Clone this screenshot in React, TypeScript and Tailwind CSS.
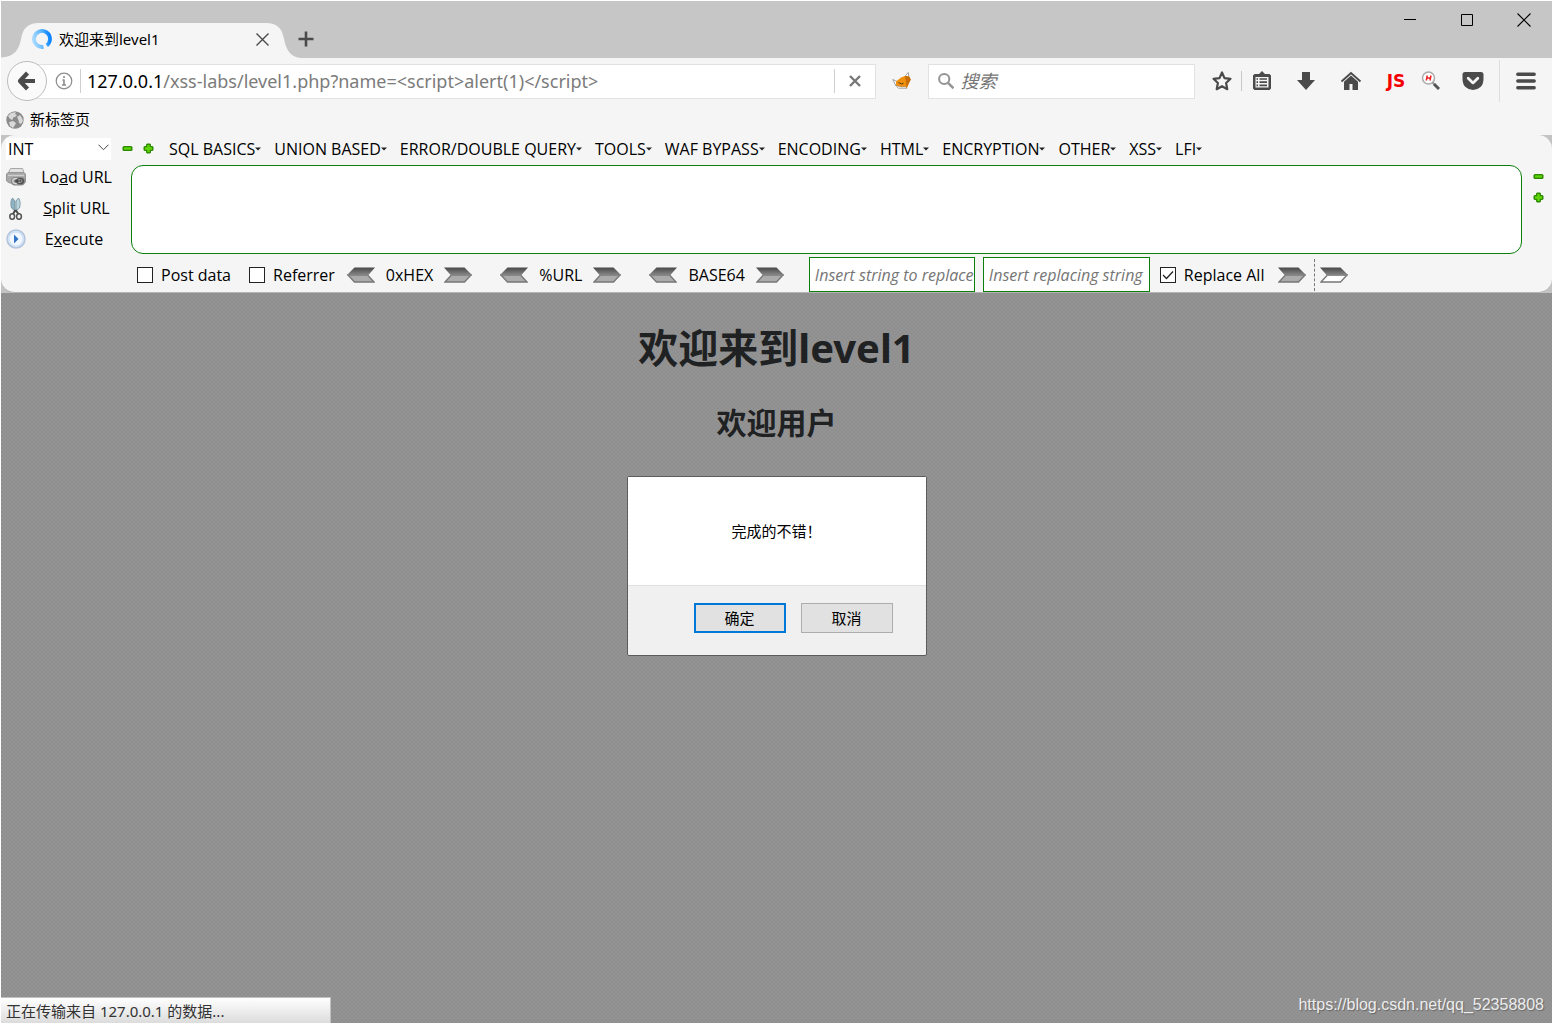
import { useState } from 'react';

const menus = [
  'SQL BASICS',
  'UNION BASED',
  'ERROR/DOUBLE QUERY',
  'TOOLS',
  'WAF BYPASS',
  'ENCODING',
  'HTML',
  'ENCRYPTION',
  'OTHER',
  'XSS',
  'LFI',
];

const encoders = ['0xHEX', '%URL', 'BASE64'];

/* ---------- Icons ---------- */

function MinusIcon() {
  return (
    <svg width="11" height="11" viewBox="0 0 11 11">
      <rect x="0.5" y="3" width="10" height="5" rx="1.5" fill="#2f8a00" />
      <rect x="2" y="4.4" width="7" height="2.2" fill="#5fd60a" />
    </svg>
  );
}

function PlusIcon() {
  return (
    <svg width="11" height="11" viewBox="0 0 11 11">
      <path d="M4 .5h3l1 1v1.500h1.500l1 1v3l-1 1H8v1.500l-1 1H4l-1-1V8H1.500l-1-1V4l1-1H3V1.500z" fill="#2f8a00" />
      <path d="M4.300 2h2.400v2.300H9v2.400H6.700V9H4.300V6.700H2V4.300h2.300z" fill="#5fd60a" />
    </svg>
  );
}

function ArrowIcon({ left = false, hollow = false }: { left?: boolean; hollow?: boolean }) {
  return (
    <svg width="28" height="16" viewBox="0 0 28 16">
      <defs>
        <linearGradient id="arrowDark" x1="0" y1="0" x2="0" y2="1">
          <stop offset="0" stopColor="#484848" />
          <stop offset="1" stopColor="#8a8a8a" />
        </linearGradient>
      </defs>
      <g transform={left ? 'matrix(-1 0 0 1 28 0)' : undefined}>
        <path d="M1 15L7.500 8H27l-6.500 7z" fill={hollow ? '#fff' : '#ababab'} stroke="#777" strokeWidth="1.300" />
        <path d="M0 .5h20.500L28 8v.5H7z" fill="url(#arrowDark)" />
      </g>
    </svg>
  );
}

function LoadIcon() {
  return (
    <svg width="20" height="20" viewBox="0 0 20 20">
      <path d="M4.500 1.500h12l1.500 4H2.500z" fill="#e2e2e2" stroke="#a8a8a8" />
      <path d="M.5 7L2 5.500h16L19.500 7v8l-1 1H3.500l-3-2z" fill="#a8a8a8" stroke="#969696" />
      <path d="M2 8.500h16" stroke="#d0d0d0" strokeWidth="1.200" />
      <rect x="5" y="10" width="14" height="8.500" rx="4" fill="#8a8a8a" />
      <rect x="6.800" y="11.600" width="6.500" height="5" rx="2.500" fill="none" stroke="#ddd" strokeWidth="1.200" />
      <rect x="10.800" y="11.600" width="6.500" height="5" rx="2.500" fill="none" stroke="#505050" strokeWidth="1.400" />
      <path d="M9 14h6" stroke="#444" strokeWidth="1.400" />
    </svg>
  );
}

function ScissorsIcon() {
  return (
    <svg width="20" height="22" viewBox="0 1 20 22">
      <path d="M6.500 1C4.500 3 4.500 8 5.500 11l3.500 3V4z" fill="#8fb3c2" stroke="#6d8f9d" strokeWidth=".8" />
      <path d="M12.500 1c2 2 2 7 1 10L10 14V4z" fill="#b9d3dd" stroke="#6d8f9d" strokeWidth=".8" />
      <path d="M9.500 13l-2.500 4M9.500 13l3 4" stroke="#444" strokeWidth="2" />
      <ellipse cx="6.200" cy="19.500" rx="2.400" ry="2.800" fill="none" stroke="#555" strokeWidth="1.600" />
      <ellipse cx="13" cy="19.500" rx="2.400" ry="2.800" fill="none" stroke="#555" strokeWidth="1.600" />
    </svg>
  );
}

function ExecuteIcon() {
  return (
    <svg width="20" height="20" viewBox="0 0 20 20">
      <circle cx="10" cy="10" r="9" fill="#d3e3f6" stroke="#b3c4dd" strokeWidth="1.500" />
      <circle cx="10" cy="10" r="6.300" fill="#f2f8ff" />
      <path d="M8 5.500l4.500 4.500L8 14.500z" fill="#2f74c6" />
    </svg>
  );
}

function FoxIcon() {
  return (
    <svg width="20" height="18" viewBox="0 0 20 18">
      <path d="M.8 7.500L5 9.500 4 14zM13 4.500L16.200.5l.8 5z" fill="#fff" stroke="#8a8a8a" strokeWidth=".8" />
      <path d="M4 9.500L9 5.500l4-1.500 4 .5 1.800 3L17 11l-2 5H6l-2-2.500z" fill="#f0900c" />
      <path d="M13 4l4 .5 1.800 3L17 11l-2.500 5-.5-6z" fill="#c76d08" />
      <path d="M4 13.500l2.500 3H15l-1.500-1.800-4 .3z" fill="#e8e8e8" stroke="#8a8a8a" strokeWidth=".5" />
      <path d="M6.500 10.500l3 1.500 2-.8" fill="none" stroke="#4a3a20" />
    </svg>
  );
}

function GlobeIcon() {
  return (
    <svg width="18" height="18" viewBox="0 0 18 18">
      <circle cx="9" cy="9" r="8.700" fill="#8a8a8a" />
      <path d="M2 5l3-3 5-1-1 2 2 1-2 2-2 .5L6.500 9 4 8zM11 6l3-2 2 3 1 3-2 3-2-1-.5-3zM3 11l4-1 3 2-1 2-2 3-3-2z" fill="#d8d8d8" />
    </svg>
  );
}

/* ---------- Title bar ---------- */

function TitleBar() {
  return (
    <div className="relative flex h-[57px] items-start justify-between bg-[#c6c6c6]">
      <svg width="300" height="36" viewBox="0 0 300 36" className="absolute bottom-0 left-0">
        <path d="M0 36v-.5C13 35 18 28 20 17 22 6 27 1 38 1h227c11 0 16 5 18 16 2 11 7 18.500 17 19z" fill="#f5f5f5" />
      </svg>
      <div className="relative flex h-[38px] items-center self-end">
        <div className="flex w-[269px] items-center pl-[30px]">
          <svg width="22" height="22" viewBox="0 0 22 22">
            <defs>
              <linearGradient id="ring" x1="0" y1=".6" x2="1" y2=".4">
                <stop offset="0" stopColor="#a5d8ff" />
                <stop offset=".5" stopColor="#62b8fb" />
                <stop offset="1" stopColor="#0a84ff" />
              </linearGradient>
            </defs>
            <path d="M15.800 17.400A8 8 0 1 0 12.500 18.860" fill="none" stroke="url(#ring)" strokeWidth="3.800" />
          </svg>
          <span className="ml-1.5 flex-1 text-[15px] leading-5">欢迎来到level1</span>
          <button aria-label="Close tab">
            <svg width="15" height="15" viewBox="0 0 15 15">
              <path d="M1.500 1.500l12 12M13.500 1.500l-12 12" stroke="#4a4a4a" strokeWidth="1.400" />
            </svg>
          </button>
        </div>
        <button aria-label="New tab" className="ml-7">
          <svg width="16" height="16" viewBox="0 0 16 16">
            <path d="M8 .5v15M.5 8h15" stroke="#4a4a4a" strokeWidth="2.600" />
          </svg>
        </button>
      </div>
      <div className="flex gap-[43px] pt-3 pr-[21px]">
        <button aria-label="Minimize">
          <svg width="14" height="14" viewBox="0 0 14 14"><path d="M1 6.500h12" stroke="#000" /></svg>
        </button>
        <button aria-label="Maximize">
          <svg width="14" height="14" viewBox="0 0 14 14"><path d="M1.500 1.500h11v11h-11z" fill="none" stroke="#000" /></svg>
        </button>
        <button aria-label="Close">
          <svg width="14" height="14" viewBox="0 0 14 14"><path d="M.5.5l13 13M13.500.5l-13 13" stroke="#000" strokeWidth="1.100" /></svg>
        </button>
      </div>
    </div>
  );
}

/* ---------- Navigation toolbar ---------- */

function NavBar() {
  return (
    <div className="flex h-[46px] items-center pl-1.5">
      <button aria-label="Back" className="z-10 flex size-10 items-center justify-center rounded-full border border-[#bdbdbd] bg-[#fafafa]">
        <svg width="20" height="20" viewBox="0 0 20 20">
          <path d="M10.500 2L3 10l7.500 8M4 10h14" fill="none" stroke="#4a4a4a" strokeWidth="4.200" strokeLinejoin="round" />
        </svg>
      </button>
      <div className="-ml-3 flex h-[35px] flex-1 items-center border border-[#e2e2e2] bg-white pl-[19px]">
        <svg width="18" height="18" viewBox="0 0 18 18">
          <circle cx="9" cy="9" r="7.800" fill="none" stroke="#8c8c8c" strokeWidth="1.200" />
          <path d="M9 4v2M9 7.500v5.500M7.500 8H9M7 13h4" stroke="#8c8c8c" strokeWidth="1.600" />
        </svg>
        <div className="ml-[7px] flex h-6 flex-1 items-center border-l border-[#cfcfcf] pl-1.5 text-[18px] text-[#7b7b7b]">
          <span className="text-black">127.0.0.1</span>/xss-labs/level1.php?name=&lt;script&gt;alert(1)&lt;/script&gt;
        </div>
        <button aria-label="Stop" className="flex h-6 w-[41px] items-center justify-center border-l border-[#cfcfcf]">
          <svg width="12" height="12" viewBox="0 0 12 12">
            <path d="M1 1l10 10M11 1L1 11" stroke="#777" strokeWidth="2.400" />
          </svg>
        </button>
      </div>
      <button aria-label="HackBar" className="mx-4"><FoxIcon /></button>
      <label className="flex h-[35px] w-[267px] items-center border border-[#e2e2e2] bg-white pl-[9px]">
        <svg width="18" height="18" viewBox="0 0 18 18">
          <circle cx="6.800" cy="6.800" r="5.600" fill="none" stroke="#949494" strokeWidth="2.200" />
          <path d="M11 11l6 6" stroke="#949494" strokeWidth="2.600" />
        </svg>
        <input
          type="text"
          aria-label="搜索"
          placeholder="搜索"
          className="ml-1.5 w-full min-w-0 text-[18px] italic outline-none placeholder:text-[#757575]"
        />
      </label>
      <div className="flex items-center text-[#4a4a4a]">
        <button aria-label="Bookmark" className="ml-4">
          <svg width="22" height="22" viewBox="0 0 22 22">
            <path d="M11 2.500l2.500 5.600 6 .7-4.400 4.200 1.200 6.200L11 16.200l-5.300 3 1.200-6.200-4.400-4.200 6-.7z" fill="none" stroke="currentColor" strokeWidth="2.200" strokeLinejoin="round" />
          </svg>
        </button>
        <span className="ml-2 h-5 w-px bg-[#c8c8c8]" />
        <button aria-label="Bookmarks list" className="ml-2.5">
          <svg width="20" height="20" viewBox="0 0 20 20">
            <path d="M7 3l3-3 3 3h4.500L19 4.500v13L17.500 19h-15L1 17.500v-13L2.500 3z" fill="currentColor" />
            <path d="M3.500 6h13v10.500h-13z" fill="#f5f5f5" />
            <path d="M4.500 8h1.500M7.500 8H15M4.500 11.200h1.500M7.500 11.200H15M4.500 14.400h1.500M7.500 14.400H15" stroke="currentColor" strokeWidth="1.700" />
          </svg>
        </button>
        <button aria-label="Downloads" className="ml-6">
          <svg width="20" height="20" viewBox="0 0 20 20">
            <path d="M6 1h8v8h5l-9 10L1 9h5z" fill="currentColor" />
          </svg>
        </button>
        <button aria-label="Home" className="ml-6">
          <svg width="22" height="20" viewBox="0 0 22 20">
            <path d="M1.500 10.500L11 2l9.500 8.500" fill="none" stroke="currentColor" strokeWidth="1.900" />
            <path d="M4 10.700l7-6.200 7 6.200V19h-5.500v-6h-3v6H4z" fill="currentColor" />
          </svg>
        </button>
        <button className="ml-6 w-5 text-center font-['DejaVu_Sans',sans-serif] text-[17px] leading-5 font-bold text-[#f50000]">JS</button>
        <button aria-label="Inspect" className="ml-[15px]">
          <svg width="20" height="20" viewBox="0 0 20 20">
            <circle cx="7.500" cy="7" r="6" fill="#fff" stroke="#aaa" strokeWidth="1.500" />
            <path d="M6.300 4.500l-1 5M10 4.500l-1 5M6 7h3.500" stroke="#ee2020" strokeWidth="1.500" />
            <path d="M11.500 11.500l2 2" stroke="#999" strokeWidth="2" />
            <path d="M13 13l5 5" stroke="#555" strokeWidth="3" />
          </svg>
        </button>
        <button aria-label="Pocket" className="ml-[21px]">
          <svg width="22" height="20" viewBox="0 0 22 20">
            <path d="M3 1h16q2.500 0 2.500 2.500V8q0 5-3 8-3.300 3-7.500 3t-7.500-3q-3-3-3-8V3.500Q.5 1 3 1z" fill="currentColor" />
            <path d="M6.200 7.300l4.800 4.600 4.800-4.600" fill="none" stroke="#f5f5f5" strokeWidth="2.800" strokeLinecap="round" strokeLinejoin="round" />
          </svg>
        </button>
        <span className="ml-[15px] h-[42px] w-px bg-[#dedede]" />
        <button aria-label="Menu" className="mr-4 ml-4">
          <svg width="20" height="18" viewBox="0 0 20 18">
            <path d="M1.800 2.300h16.400M1.800 9h16.400M1.800 15.700h16.400" stroke="currentColor" strokeWidth="3.400" strokeLinecap="round" />
          </svg>
        </button>
      </div>
    </div>
  );
}

/* ---------- HackBar ---------- */

function Check({ label, defaultChecked = false }: { label: string; defaultChecked?: boolean }) {
  const [checked, setChecked] = useState(defaultChecked);
  return (
    <label className="flex shrink-0 items-center gap-2">
      <span className="relative flex">
        <input
          type="checkbox"
          checked={checked}
          onChange={(e) => setChecked(e.target.checked)}
          className="size-4 appearance-none border border-[#222] bg-white"
        />
        {checked && (
          <svg width="16" height="16" viewBox="0 0 16 16" className="pointer-events-none absolute inset-0">
            <path d="M3 8l3.500 3.500L13 4.500" fill="none" stroke="#222" strokeWidth="1.300" />
          </svg>
        )}
      </span>
      {label}
    </label>
  );
}

function HackBar() {
  return (
    <div className="bg-[#c3c3c3]">
      <div className="rounded-[14px] border-b border-[#b5b5b5] bg-[#f5f5f5] pt-0.5 font-['Open_Sans','Noto_Sans_CJK_SC',sans-serif] text-[16px] leading-5">
        <div className="flex h-[23px] items-center pl-[5px]">
          <div className="relative w-[105px]">
            <select aria-label="Type" className="h-[22px] w-full appearance-none bg-white pl-0.5">
              <option>INT</option>
            </select>
            <svg width="11" height="7" viewBox="0 0 11 7" className="pointer-events-none absolute top-1.5 right-0.5">
              <path d="M.5.700l5 5 5-5" fill="none" stroke="#444" />
            </svg>
          </div>
          <div className="ml-[11px] flex gap-2.5">
            <button aria-label="Remove"><MinusIcon /></button>
            <button aria-label="Add"><PlusIcon /></button>
          </div>
          <nav className="ml-[15px] flex gap-[13px]">
            {menus.map((menu) => (
              <button key={menu} className="flex items-center whitespace-nowrap">
                {menu}
                <svg width="6" height="4" viewBox="0 0 6 4"><path d="M0 .5h6l-3 3z" fill="#222" /></svg>
              </button>
            ))}
          </nav>
        </div>

        <div className="mt-[5px] flex pl-[5px]">
          <div className="w-[125px]">
            <button className="flex h-[31px] w-full items-start pt-0.5">
              <LoadIcon />
              <span className="w-[101px] text-center">Lo<u>a</u>d URL</span>
            </button>
            <button className="flex h-[31px] w-full items-start pt-0.5">
              <ScissorsIcon />
              <span className="w-[101px] text-center"><u>S</u>plit URL</span>
            </button>
            <button className="flex h-[27px] w-full items-start pt-0.5">
              <ExecuteIcon />
              <span className="w-24 text-center">E<u>x</u>ecute</span>
            </button>
          </div>
          <textarea aria-label="URL" className="h-[89px] flex-1 resize-none rounded-[12px] border border-[#0a800a] bg-white px-2 py-1 outline-none" />
          <div className="flex flex-col gap-2.5 pt-1.5 pr-2 pl-[11px]">
            <button aria-label="Shrink"><MinusIcon /></button>
            <button aria-label="Grow"><PlusIcon /></button>
          </div>
        </div>

        <div className="mt-[3px] flex h-[35px] items-center pl-[136px]">
          <Check label="Post data" />
          <div className="ml-[18px]"><Check label="Referrer" /></div>
          <div className="ml-3 flex gap-7">
            {encoders.map((name) => (
              <div key={name} className="flex items-center gap-[11px]">
                <button aria-label={`Decode ${name}`}><ArrowIcon left /></button>
                <span>{name}</span>
                <button aria-label={`Encode ${name}`}><ArrowIcon /></button>
              </div>
            ))}
          </div>
          <input
            type="text"
            aria-label="Insert string to replace"
            placeholder="Insert string to replace"
            className="ml-[25px] h-[35px] w-[166px] border border-[#0a800a] bg-white pl-[5px] italic outline-none placeholder:text-[#757575]"
          />
          <input
            type="text"
            aria-label="Insert replacing string"
            placeholder="Insert replacing string"
            className="mr-2.5 ml-2 h-[35px] w-[167px] border border-[#0a800a] bg-white pl-[5px] italic outline-none placeholder:text-[#757575]"
          />
          <Check label="Replace All" defaultChecked />
          <button aria-label="Replace" className="ml-3.5"><ArrowIcon /></button>
          <span className="ml-2 h-8 border-l border-dashed border-[#777]" />
          <button aria-label="Replace next" className="ml-[5px]"><ArrowIcon hollow /></button>
        </div>
      </div>
    </div>
  );
}

/* ---------- Alert ---------- */

function AlertDialog() {
  return (
    <div role="alertdialog" aria-label="alert" className="mt-8 w-[300px] rounded-[2px] border border-[#5c5c5c] bg-[#f0f0f0] text-[15px] leading-5">
      <p className="flex h-[109px] items-center justify-center border-b border-[#dfdfdf] bg-white">完成的不错！</p>
      <div className="flex h-[69px] justify-end gap-[15px] pt-[17px] pr-[33px]">
        <button className="h-[30px] w-[92px] border-2 border-[#0078d7] bg-[#e1e1e1]">确定</button>
        <button className="h-[30px] w-[92px] border border-[#adadad] bg-[#e1e1e1]">取消</button>
      </div>
    </div>
  );
}

export default function App() {
  return (
    <div className="flex min-h-screen flex-col border border-white bg-[#f5f5f5] font-['Noto_Sans','Noto_Sans_CJK_SC',sans-serif] text-black">
      <TitleBar />
      <NavBar />
      <div className="flex h-[31px] items-center pl-[5px] text-[15px]">
        <a href="#" className="flex items-center gap-1.5"><GlobeIcon />新标签页</a>
      </div>
      <HackBar />
      <main className="relative flex flex-1 flex-col items-center bg-[#919192] bg-[conic-gradient(#8e8e8f_25%,#949495_0_50%,#8e8e8f_0_75%,#949495_0)] bg-[length:4px_4px] pt-[25px] text-[#202122]">
        <h1 className="text-[40px] leading-[60px] font-bold">欢迎来到level1</h1>
        <h2 className="mt-6 text-[30px] leading-[42px] font-bold">欢迎用户</h2>
        <div className="text-black"><AlertDialog /></div>
        <div className="absolute bottom-0 left-0 h-[26px] w-[330px] border-t border-r border-[#c0c0c0] bg-gradient-to-b from-white to-[#dcdcdc] pl-[5px] text-[15px] leading-[26px] text-[#333]">
          正在传输来自 127.0.0.1 的数据...
        </div>
        <div className="absolute right-2 bottom-1.5 font-['Liberation_Sans',sans-serif] text-[16px] leading-6 text-[#ededed] [text-shadow:1px_1px_1px_#666]">
          https://blog.csdn.net/qq_52358808
        </div>
      </main>
    </div>
  );
}
